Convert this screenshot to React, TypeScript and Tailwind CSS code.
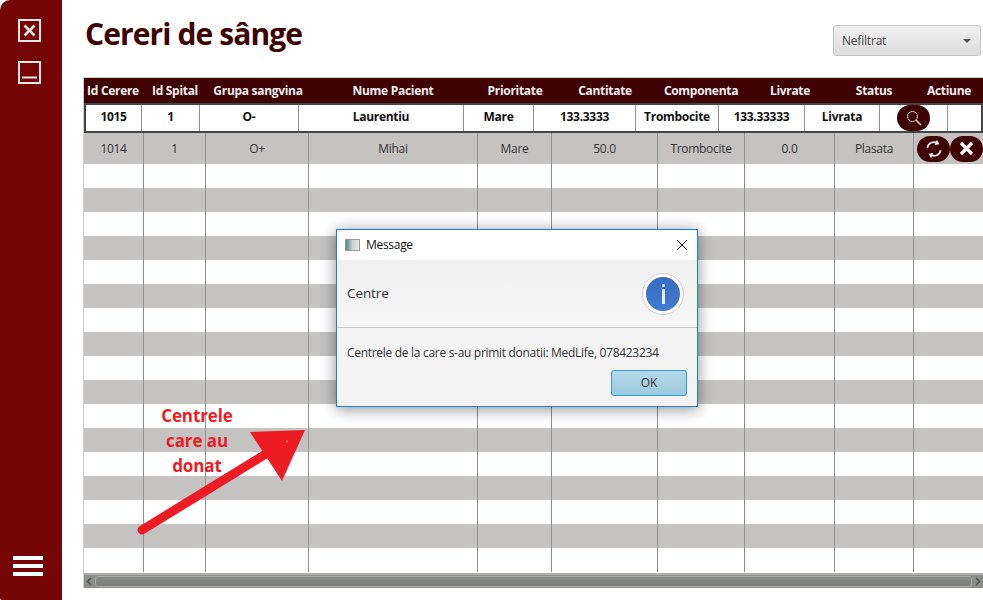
import React from 'react';

const headers = [
  ['Id Cerere', 58],
  ['Id Spital', 66],
  ['Grupa sangvina', 100],
  ['Nume Pacient', 170],
  ['Prioritate', 74],
  ['Cantitate', 106],
  ['Componenta', 86],
  ['Livrate', 92],
  ['Status', 76],
  ['Actiune', 74],
] as const;

const selected = [
  ['1015', 56],
  ['1', 58],
  ['O-', 99],
  ['Laurentiu', 165],
  ['Mare', 70],
  ['133.3333', 102],
  ['Trombocite', 83],
  ['133.33333', 86],
  ['Livrata', 75],
] as const;

const columns = [60, 62, 103, 169, 74, 106, 87, 90, 79];
const firstRow = ['1014', '1', 'O+', 'Mihai', 'Mare', '50.0', 'Trombocite', '0.0', 'Plasata'];
const emptyRows = Array.from({ length: 17 }, (_, i) => i);

const RoundBtn = ({ children }: { children: React.ReactNode }) => (
  <div className="w-[33px] h-[26px] shrink-0 rounded-full bg-[#3f0203] flex items-center justify-center">{children}</div>
);

const Row = ({ gray }: { gray: boolean }) => (
  <div className={`flex h-6 ${gray ? 'bg-[#c4c3c1]' : 'bg-white'}`}>
    {columns.map((w, i) => (
      <div key={i} style={{ width: w }} className="shrink-0 border-r border-[#929292]" />
    ))}
  </div>
);

export default function App() {
  return (
    <div className="relative flex w-[983px] h-[600px] overflow-hidden bg-white font-['Open_Sans','Noto_Sans',sans-serif]">
      {/* sidebar */}
      <div className="w-[62px] shrink-0 bg-[#750505] rounded-tl-[10px] rounded-bl-[2px] flex flex-col justify-between pt-[19px] pb-[24px] pl-[18px]">
        <div className="flex flex-col gap-[19px]">
          <svg width="23" height="23" viewBox="0 0 23 23" fill="none" stroke="#f3e6e6">
            <rect x="1" y="1" width="21" height="21" strokeWidth="2" />
            <path d="M6.500 6.500l10 10M16.500 6.500l-10 10" strokeWidth="2.500" />
          </svg>
          <svg width="23" height="23" viewBox="0 0 23 23" fill="none" stroke="#f3e6e6">
            <rect x="1" y="1" width="21" height="21" strokeWidth="2" />
            <path d="M4 16.500h15" strokeWidth="2" />
          </svg>
        </div>
        <div className="w-[30px] -ml-[5px] flex flex-col gap-[4px]">
          <div className="h-1 bg-white" />
          <div className="h-1 bg-white" />
          <div className="h-1 bg-white" />
        </div>
      </div>

      {/* main */}
      <div className="flex-1 min-w-0 flex flex-col pl-[21px]">
        <div className="h-[77px] shrink-0 flex justify-between pl-[2px]">
          <h1 className="text-[30px] leading-none font-bold text-[#3f0203] pt-[19px] tracking-[-0.9px]">Cereri de sânge</h1>
          <div className="mt-[25px] mr-[2px] w-[148px] h-[31px] rounded-[3px] border border-[#c4c4c4] bg-gradient-to-b from-[#f0f0f0] to-[#dcdcdc] flex items-center justify-between pl-2 pr-[9px] text-[12px] tracking-[-0.2px] text-[#444]">
            <span>Nefiltrat</span>
            <span className="w-0 h-0 border-x-[4px] border-x-transparent border-t-[4px] border-t-[#555]" />
          </div>
        </div>

        <div className="w-[900px] h-[511px] border-t border-l border-[#cfcfcf] flex flex-col">
          <div className="flex h-[25px] shrink-0 bg-[#3f0203] overflow-hidden items-center">
            {headers.map(([label, w]) => (
              <div key={label} style={{ width: w }} className="shrink-0 text-center text-[12px] font-bold tracking-[-0.3px] text-[#f4eeee] whitespace-nowrap">
                {label}
              </div>
            ))}
          </div>
          <div className="flex h-[30px] shrink-0 border-2 border-[#444] bg-white overflow-hidden">
            {selected.map(([text, w], i) => (
              <div key={i} style={{ width: w }} className="shrink-0 border-r border-[#929292] flex items-center justify-center pb-[2px] text-[12px] font-bold tracking-[-0.3px] text-[#111]">
                {text}
              </div>
            ))}
            <div className="w-[68px] shrink-0 border-r border-[#929292] flex items-center justify-center">
              <RoundBtn>
                <svg width="18" height="18" viewBox="0 0 18 18" fill="none" stroke="#d8caca">
                  <circle cx="7.500" cy="7.500" r="5" strokeWidth="1" />
                  <path d="M11 11l5 5" strokeWidth="1.600" />
                </svg>
              </RoundBtn>
            </div>
          </div>

          <div className="flex-1 overflow-hidden">
            <div className="flex h-[31px] bg-[#c4c3c1] overflow-hidden">
              {firstRow.map((text, i) => (
                <div key={i} style={{ width: columns[i] }} className="shrink-0 border-r border-[#929292] flex items-center justify-center text-[12px] tracking-[-0.3px] text-[#333]">
                  {text}
                </div>
              ))}
              <div className="flex items-center pl-[3px]">
                <RoundBtn>
                  <svg width="20" height="20" viewBox="0 0 24 24" fill="none" stroke="#f4eeee" strokeWidth="2">
                    <path d="M20 13.500a8 8 0 0 1-12 5.500M4 10.500a8 8 0 0 1 12-5.500" />
                    <path d="M15 2l2 3.500-4 .8M9 22l-2-3.500 4-.8" />
                  </svg>
                </RoundBtn>
                <RoundBtn>
                  <svg width="15" height="15" viewBox="0 0 15 15" fill="none" stroke="#fff" strokeWidth="3.200">
                    <path d="M2 2l11 11M13 2L2 13" />
                  </svg>
                </RoundBtn>
              </div>
            </div>
            {emptyRows.map((i) => (
              <Row key={i} gray={i % 2 === 1} />
            ))}
          </div>

          <div className="h-[15px] shrink-0 bg-[#8c8e8a] border-t-2 border-[#b0b0ae] flex items-center justify-between px-[2px]">
            <svg width="6" height="9" viewBox="0 0 6 9" fill="none" stroke="#555" strokeWidth="1.600"><path d="M5 1L1.500 4.500 5 8" /></svg>
            <div className="flex-1 mx-[3px] h-[11px] rounded-[3px] border border-[#a9aba7] bg-gradient-to-b from-[#8a8c88] to-[#7c7e7a]" />
            <svg width="6" height="9" viewBox="0 0 6 9" fill="none" stroke="#555" strokeWidth="1.600"><path d="M1 1l3.500 3.500L1 8" /></svg>
          </div>
        </div>
      </div>

      {/* annotation */}
      <div className="absolute left-[146px] top-[403px] w-[102px] text-center text-[17px] leading-[25px] font-bold tracking-[-0.1px] text-[#ed1c24]">
        Centrele<br />care au<br />donat
      </div>
      <svg className="absolute left-[130px] top-[420px]" width="180" height="120" viewBox="130 420 180 120">
        <path d="M142 530L274 449" stroke="#ed1c24" strokeWidth="9" strokeLinecap="round" fill="none" />
        <path d="M250 432L305 430L282 481Z" fill="#ed1c24" />
        <circle cx="287" cy="441.500" r="1" fill="#f28a8e" />
      </svg>

      {/* dialog */}
      <div className="absolute left-[336px] top-[229px] w-[362px] h-[178px] border border-[#1a84d0] bg-[#f3f3f3] shadow-[0_2px_14px_rgba(0,0,0,0.45)] flex flex-col">
        <div className="h-[30px] shrink-0 bg-white flex items-center pl-[8px] pr-[9px] text-[12px] tracking-[-0.3px] text-[#111]">
          <div className="w-[15px] h-[12px] border border-[#999] bg-gradient-to-r from-[#4b8a8a] via-[#c8d4d4] to-[#e8e8e8]" />
          <span className="ml-[6px] flex-1">Message</span>
          <svg width="12" height="12" viewBox="0 0 12 12" fill="none" stroke="#111" strokeWidth="1">
            <path d="M1 1l10 10M11 1L1 11" />
          </svg>
        </div>
        <div className="h-[68px] shrink-0 border-b border-[#c8c8c8] bg-gradient-to-b from-[#f0f0f0] to-[#f6f6f6] flex items-center justify-between pl-[10px] pr-[13px] text-[13.500px] tracking-[-0.1px] text-[#333]">
          <span>Centre</span>
          <div className="w-[42px] h-[42px] rounded-full bg-white border border-[#cfcfcf] flex items-center justify-center">
            <div className="w-[34px] h-[34px] rounded-full bg-gradient-to-b from-[#3a6cc0] to-[#3f7bd0] flex flex-col items-center justify-center gap-[2px]">
              <div className="w-[3px] h-[3px] rounded-full bg-[#e8f0fa]" />
              <div className="w-[3px] h-[15px] bg-[#e8f0fa]" />
            </div>
          </div>
        </div>
        <div className="flex-1 flex flex-col px-[10px]">
          <p className="pt-[16px] text-[12px] leading-[18px] tracking-[-0.3px] text-[#333] whitespace-nowrap">Centrele de la care s-au primit donatii: MedLife, 078423234</p>
          <div className="flex justify-end mt-[8px]">
            <div className="w-[76px] h-[26px] rounded-[3px] border border-[#2a9fd0] bg-gradient-to-b from-[#b5d8e8] to-[#9ccadf] flex items-center justify-center text-[12px] text-[#333]">OK</div>
          </div>
        </div>
      </div>
    </div>
  );
}
